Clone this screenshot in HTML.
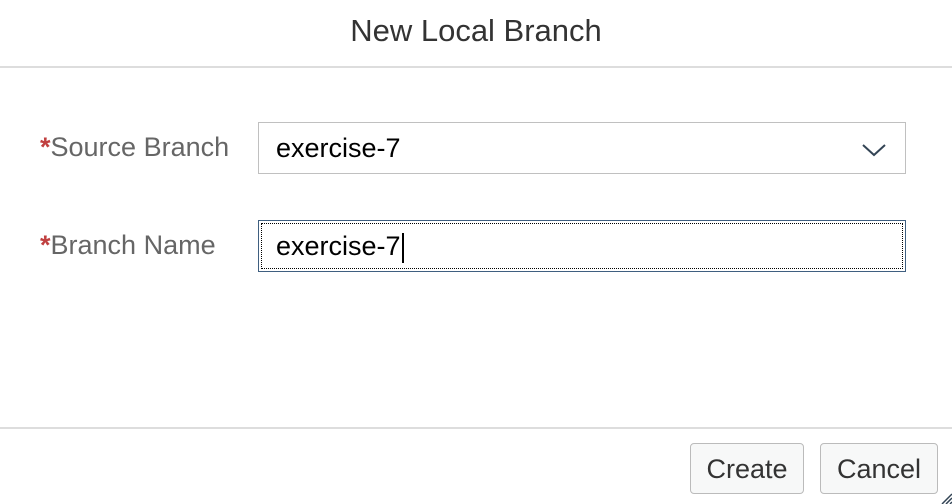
<!DOCTYPE html>
<html><head><style>
body{margin:0;width:952px;height:504px;background:#fff;font-family:"Liberation Sans",sans-serif;position:relative;overflow:hidden}
.t{position:absolute;left:0;width:952px;top:13px;text-align:center;font-size:31px;color:#333}
.hl{position:absolute;left:0;width:952px;height:2px;background:#ddd}
.lab{position:absolute;left:40px;font-size:27px;color:#666}
.lab b{color:#c04040;font-weight:bold}
.in{position:absolute;left:258px;font-size:27px;color:#000;line-height:50px;padding-left:17px;box-sizing:border-box;width:648px;height:52px;border:1px solid #c0c0c0}
.btn{position:absolute;top:443px;height:51px;border:1px solid #bbb;border-radius:4px;background:#f7f8f8;font-size:27px;color:#333;text-align:center;line-height:51px;box-sizing:border-box}
</style></head><body>
<div class="t">New Local Branch</div>
<div class="hl" style="top:66px"></div>
<div class="lab" style="top:132px"><b>*</b>Source Branch</div>
<div class="in" style="top:122px">exercise-7
<svg style="position:absolute;right:18px;top:19px" width="26" height="16" viewBox="0 0 26 16"><path d="M2 3 L13 13 L24 3" fill="none" stroke="#345" stroke-width="2"/></svg></div>
<div class="lab" style="top:230px"><b>*</b>Branch Name</div>
<div class="in" style="top:220px;border:1px solid #3f5f80;outline:1px dotted #000;outline-offset:-4px">exercise-7<span style="display:inline-block;width:2px;height:30px;background:#000;vertical-align:middle;margin-left:1px"></span></div>
<div class="hl" style="top:427px"></div>
<div class="btn" style="left:690px;width:114px">Create</div>
<div class="btn" style="left:820px;width:118px">Cancel</div>
<svg style="position:absolute;right:0;bottom:0" width="12" height="12"><path d="M12 2 L2 12 M12 6 L6 12 M12 10 L10 12" stroke="#345" stroke-width="1.5"/></svg>
</body></html>
